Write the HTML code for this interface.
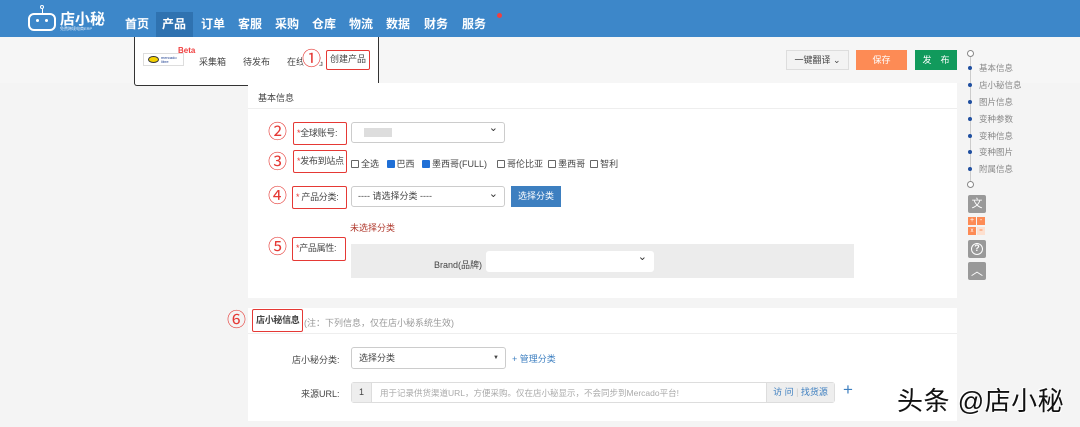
<!DOCTYPE html>
<html><head><meta charset="utf-8"><style>
*{box-sizing:border-box;margin:0;padding:0}
body{width:1080px;height:427px;overflow:hidden;background:#f4f4f4;font-family:"Liberation Sans","Noto Sans CJK SC",sans-serif;font-size:9px;color:#555;position:relative}
.a{position:absolute}
.hd{left:0;top:0;width:1080px;height:37px;background:#3d87c9}
.nav{top:12px;height:25px;line-height:25px;color:#fff;font-size:12px;font-weight:bold;text-align:center;width:38px}
.panel{background:#fff;left:248px;width:709px}
.red{border:1.5px solid #e53935;border-radius:2px;white-space:nowrap}
.num{color:#e53935;font-size:19px;line-height:20px}
.lbl{font-size:9px;color:#444;line-height:20px;padding-left:3px;letter-spacing:-0.3px}
.lbl i{color:#e53935;font-style:normal}
.sel{background:#fff;border:1px solid #ccc;border-radius:3px;height:21px}
.sel:after{content:"⌄";position:absolute;right:6px;top:-2px;font-size:11px;color:#333}
.cb{display:inline-block;width:8px;height:8px;border:1px solid #666;border-radius:1px;vertical-align:-1px;margin-right:2px;background:#fff}
.cb.on{background:#1f6fd6;border-color:#1f6fd6}
.rn{left:979px;font-size:8.5px;color:#888}
.dot{left:968px;width:4px;height:4px;border-radius:50%;background:#1f4fa0}
.ic{left:968px;width:18px;height:18px;background:#999;border-radius:2px;color:#fff;text-align:center;font-size:11px;line-height:18px}
</style></head><body>
<div class="a hd"></div>
<div class="a" style="left:28px;top:5px;width:28px;height:26px">
<div class="a" style="left:12px;top:0;width:4px;height:4px;border:1.5px solid #fff;border-radius:50%"></div>
<div class="a" style="left:13.5px;top:4px;width:1.5px;height:4px;background:#fff"></div>
<div class="a" style="left:0;top:8px;width:28px;height:18px;border:2px solid #fff;border-radius:6px"></div>
<div class="a" style="left:8px;top:14px;width:3px;height:3px;background:#fff;border-radius:50%"></div>
<div class="a" style="left:17px;top:14px;width:3px;height:3px;background:#fff;border-radius:50%"></div>
</div>
<div class="a" style="left:60px;top:8px;color:#fff;font-size:15px;font-weight:bold">店小秘</div>
<div class="a" style="left:60px;top:26px;color:#e6f0fa;font-size:4px">免费跨境电商ERP</div>
<div class="a" style="left:156px;top:12px;width:37px;height:25px;background:#2f72b0"></div>
<div class="a nav" style="left:118px">首页</div>
<div class="a nav" style="left:155px">产品</div>
<div class="a nav" style="left:194px">订单</div>
<div class="a nav" style="left:231px">客服</div>
<div class="a nav" style="left:268px">采购</div>
<div class="a nav" style="left:305px">仓库</div>
<div class="a nav" style="left:342px">物流</div>
<div class="a nav" style="left:379px">数据</div>
<div class="a nav" style="left:417px">财务</div>
<div class="a nav" style="left:455px">服务</div>
<div class="a" style="left:497px;top:13px;width:5px;height:5px;border-radius:50%;background:#f04040"></div>
<div class="a" style="left:0;top:37px;width:1080px;height:46px;background:#f6f6f6"></div>
<div class="a" style="left:134px;top:37px;width:245px;height:49px;background:#fff;border:1px solid #333;border-top:none;border-radius:0 0 3px 3px"></div>
<div class="a" style="left:143px;top:53px;width:41px;height:13px;border:1px solid #ddd;background:#fff"><div class="a" style="left:4px;top:2px;width:11px;height:7px;border-radius:50%;background:#f5d100;border:1px solid #333"></div><div class="a" style="left:17px;top:2px;font-size:4px;color:#1a3c8e;line-height:4px">mercado<br>libre</div></div>
<div class="a" style="left:178px;top:46px;color:#f04040;font-size:8px;font-weight:bold">Beta</div>
<div class="a" style="left:199px;top:55px;font-size:9px;color:#444">采集箱</div>
<div class="a" style="left:243px;top:55px;font-size:9px;color:#444">待发布</div>
<div class="a" style="left:287px;top:55px;font-size:9px;color:#444">在线产品</div>
<div class="a num" style="left:302px;top:50px;background:#fff;border-radius:50%">①</div>
<div class="a red" style="left:326px;top:50px;width:44px;height:20px;font-size:9px;color:#444;line-height:17px;text-align:center">创建产品</div>
<div class="a" style="left:786px;top:50px;width:63px;height:20px;border:1px solid #ddd;background:#f3f3f3;color:#444;font-size:9px;line-height:18px;text-align:center">一键翻译 ⌄</div>
<div class="a" style="left:856px;top:50px;width:51px;height:20px;background:#fd8b55;color:#fff;font-size:9px;line-height:20px;text-align:center">保存</div>
<div class="a" style="left:915px;top:50px;width:42px;height:20px;background:#119a5c;color:#fff;font-size:9px;line-height:20px;text-align:center">发　布</div>
<div class="a panel" style="top:83px;height:215px"></div>
<div class="a" style="left:248px;top:108px;width:709px;height:1px;background:#eee"></div>
<div class="a" style="left:258px;top:91px;font-size:9px;color:#444">基本信息</div>
<div class="a num" style="left:268px;top:123px">②</div>
<div class="a red lbl" style="left:293px;top:122px;width:54px;height:23px"><i>*</i>全球账号:</div>
<div class="a sel" style="left:351px;top:122px;width:154px"><div class="a" style="left:12px;top:5px;width:28px;height:9px;background:#ddd"></div></div>
<div class="a num" style="left:268px;top:153px">③</div>
<div class="a red lbl" style="left:293px;top:150px;width:54px;height:23px;overflow:hidden"><i>*</i>发布到站点</div>
<div class="a" style="left:351px;top:157px;font-size:9px;color:#444;white-space:nowrap"><span class="cb"></span>全选&nbsp;&nbsp;&nbsp;<span class="cb on"></span>巴西&nbsp;&nbsp;&nbsp;<span class="cb on"></span>墨西哥(FULL)&nbsp;&nbsp;&nbsp;&nbsp;<span class="cb"></span>哥伦比亚&nbsp;&nbsp;<span class="cb"></span>墨西哥&nbsp;&nbsp;<span class="cb"></span>智利</div>
<div class="a num" style="left:268px;top:187px">④</div>
<div class="a red lbl" style="left:292px;top:186px;width:55px;height:23px"><i>*</i> 产品分类:</div>
<div class="a sel" style="left:351px;top:186px;width:154px;color:#444;font-size:9px;line-height:19px;padding-left:6px">---- 请选择分类 ----</div>
<div class="a" style="left:511px;top:186px;width:50px;height:21px;background:#3d7fc0;color:#fff;font-size:9px;line-height:21px;text-align:center">选择分类</div>
<div class="a" style="left:350px;top:221px;color:#b03a2e;font-size:9px">未选择分类</div>
<div class="a num" style="left:268px;top:238px">⑤</div>
<div class="a red lbl" style="left:292px;top:237px;width:54px;height:24px;line-height:21px"><i>*</i>产品属性:</div>
<div class="a" style="left:351px;top:244px;width:503px;height:34px;background:#ececec"></div>
<div class="a" style="left:434px;top:258px;font-size:9px;color:#444">Brand(品牌)</div>
<div class="a sel" style="left:486px;top:251px;width:168px;border-color:#fff"></div>
<div class="a panel" style="top:308px;height:113px"></div>
<div class="a" style="left:248px;top:333px;width:709px;height:1px;background:#eee"></div>
<div class="a num" style="left:227px;top:311px">⑥</div>
<div class="a red" style="left:252px;top:309px;width:51px;height:23px;font-size:9px;font-weight:bold;color:#444;line-height:20px;padding-left:3px;letter-spacing:-0.3px">店小秘信息</div>
<div class="a" style="left:304px;top:316px;font-size:9px;color:#999">(注：下列信息，仅在店小秘系统生效)</div>
<div class="a" style="left:292px;top:353px;font-size:9px;color:#444">店小秘分类:</div>
<div class="a" style="left:351px;top:347px;width:155px;height:22px;background:#fff;border:1px solid #ccc;border-radius:3px;font-size:9px;color:#444;line-height:20px;padding-left:7px">选择分类<span class="a" style="right:6px;top:0;font-size:6px">▼</span></div>
<div class="a" style="left:512px;top:352px;font-size:9px;color:#3d7fc0">+ 管理分类</div>
<div class="a" style="left:301px;top:387px;font-size:9px;color:#444">来源URL:</div>
<div class="a" style="left:351px;top:382px;width:484px;height:21px;border:1px solid #ddd;border-radius:3px;background:#fff"></div>
<div class="a" style="left:352px;top:383px;width:20px;height:19px;background:#eee;border-right:1px solid #ddd;font-size:9px;color:#444;line-height:19px;text-align:center">1</div>
<div class="a" style="left:380px;top:387px;font-size:8.5px;color:#aaa;white-space:nowrap">用于记录供货渠道URL，方便采购。仅在店小秘显示，不会同步到Mercado平台!</div>
<div class="a" style="left:766px;top:383px;width:68px;height:19px;background:#eee;border-left:1px solid #ddd;font-size:9px;color:#3d7fc0;line-height:19px;text-align:center">访 问 <span style="color:#ccc">|</span> 找货源</div>
<div class="a" style="left:843px;top:380px;font-size:17px;color:#3d7fc0">+</div>
<div class="a" style="left:970px;top:57px;width:1px;height:124px;background:#ccc"></div>
<div class="a" style="left:967px;top:50px;width:7px;height:7px;border:1px solid #888;border-radius:50%;background:#fff"></div>
<div class="a" style="left:967px;top:181px;width:7px;height:7px;border:1px solid #888;border-radius:50%;background:#fff"></div>
<div class="a dot" style="top:66px"></div><div class="a rn" style="top:62px">基本信息</div>
<div class="a dot" style="top:83px"></div><div class="a rn" style="top:79px">店小秘信息</div>
<div class="a dot" style="top:100px"></div><div class="a rn" style="top:96px">图片信息</div>
<div class="a dot" style="top:117px"></div><div class="a rn" style="top:113px">变种参数</div>
<div class="a dot" style="top:134px"></div><div class="a rn" style="top:130px">变种信息</div>
<div class="a dot" style="top:150px"></div><div class="a rn" style="top:146px">变种图片</div>
<div class="a dot" style="top:167px"></div><div class="a rn" style="top:163px">附属信息</div>
<div class="a ic" style="top:195px">文</div>
<div class="a" style="left:968px;top:217px;width:18px;height:19px">
<div class="a" style="left:0;top:0;width:8px;height:8px;background:#fd8b55;color:#fff;font-size:7px;line-height:8px;text-align:center">+</div>
<div class="a" style="left:9px;top:0;width:8px;height:8px;background:#fd8b55;color:#fff;font-size:7px;line-height:8px;text-align:center">-</div>
<div class="a" style="left:0;top:10px;width:8px;height:8px;background:#fd8b55;color:#fff;font-size:6px;line-height:8px;text-align:center">x</div>
<div class="a" style="left:9px;top:10px;width:8px;height:8px;background:#fde0d0;color:#fd8b55;font-size:6px;line-height:8px;text-align:center">=</div></div>
<div class="a ic" style="top:240px"><div class="a" style="left:3px;top:3px;width:12px;height:12px;border:1.5px solid #fff;border-radius:50%;font-size:9px;line-height:9px;font-weight:bold">?</div></div>
<div class="a ic" style="top:262px;font-size:12px">︿</div>
<div class="a" style="left:897px;top:381px;font-size:26px;letter-spacing:0.5px;color:#111;text-shadow:1px 1px 0 #fff,-1px -1px 0 #fff;white-space:nowrap">头条 @店小秘</div>
</body></html>
